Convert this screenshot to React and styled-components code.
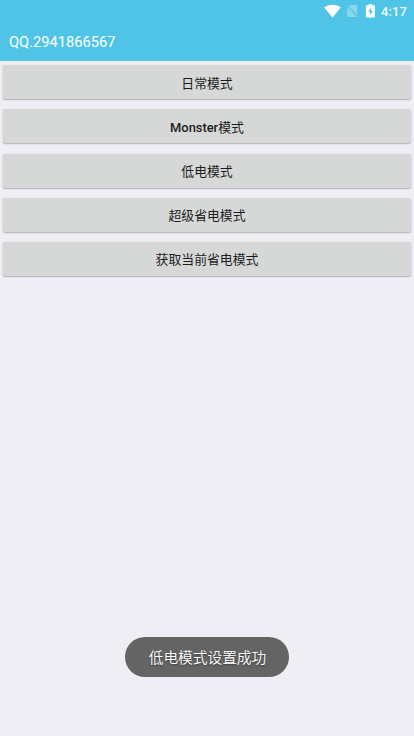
import React from "react";
import styled, { createGlobalStyle } from "styled-components";

const GlobalStyle = createGlobalStyle`
  * { box-sizing: border-box; }
  body { margin: 0; background: #efeef4; }
`;

const Screen = styled.main`
  position: relative;
  height: 736px;
  overflow: hidden;
  background: #efeef4;
  font-family: Roboto, "Noto Sans CJK SC", sans-serif;
`;

const Header = styled.header`
  height: 61px;
  background: #50c4e6;
  color: #fff;
`;

const StatusBar = styled.div`
  display: flex;
  align-items: center;
  justify-content: flex-end;
  height: 22px;
  padding-right: 7px;
`;

const WifiIcon = styled.svg`
  width: 17px;
  height: 14px;
  margin-right: 5px;
`;

const SimIcon = styled.svg`
  width: 12px;
  height: 14px;
  margin-right: 8px;
`;

const BatteryIcon = styled.svg`
  width: 9px;
  height: 14px;
  margin-right: 6px;
`;

const Clock = styled.time`
  width: 26px;
  font-size: 13px;
  font-weight: 500;
  line-height: 22px;
  letter-spacing: 0.1px;
  padding-top: 1px;
  color: rgba(255, 255, 255, 0.94);
`;

const Title = styled.h1`
  margin: 0;
  padding-left: 9px;
  font-size: 14.7px;
  font-weight: 400;
  line-height: 40px;
`;

const ModeList = styled.div`
  display: flex;
  flex-direction: column;
  gap: 10.07px;
  padding: 4.4px 3px 0;
`;

const ModeButton = styled.button`
  height: 34px;
  padding: 2.6px 0 0;
  border: 0;
  border-radius: 2px;
  background: #d6d8d7;
  box-shadow: 0 1px 1.5px rgba(0, 0, 0, 0.25), 0 0 1px rgba(0, 0, 0, 0.12);
  color: #1c1d1d;
  font-family: inherit;
  font-size: 12.87px;
  font-weight: 400;
  line-height: 32px;
`;

const Latin = styled.span`
  font-weight: 500;
`;

const Toast = styled.div`
  position: absolute;
  top: 637px;
  left: 125px;
  width: 164px;
  height: 40px;
  padding-left: 1px;
  border-radius: 20px;
  background: #646464;
  color: #fff;
  font-size: 14.7px;
  font-weight: 350;
  line-height: 42px;
  text-align: center;
  text-shadow: 0 1px 2px rgba(0, 0, 0, 0.4);
`;

const modes = [
  { label: "日常模式" },
  { latin: "Monster", label: "模式" },
  { label: "低电模式" },
  { label: "超级省电模式" },
  { label: "获取当前省电模式" },
];

export default function App() {
  return (
    <Screen>
      <GlobalStyle />
      <Header>
        <StatusBar>
          <WifiIcon viewBox="0 0 17 14">
            <path d="M0.2 3.5C5.2 -0.1 11.8 -0.1 16.8 3.5L8.5 13.5Z" fill="#fff" />
          </WifiIcon>
          <SimIcon viewBox="0 0 12 14">
            <path d="M4.6 1H10.2Q11.2 1 11.2 2V10.8L3.1 2.5ZM1.2 3.3L10.6 13H2.2Q1.2 13 1.2 12Z" fill="#fff" opacity=".32" />
            <path d="M0.6 1.5L11.8 13.1" stroke="#fff" strokeWidth=".7" opacity=".35" />
          </SimIcon>
          <BatteryIcon viewBox="0 0 9 14">
            <path fillRule="evenodd" d="M2.8 0H6.2V1.3H8.2Q9 1.3 9 2.1V12.7Q9 13.5 8.2 13.5H.8Q0 13.5 0 12.7V2.1Q0 1.3 .8 1.3H2.8ZM5.2 3.5L2.2 7.8H4.1V11.3L6.9 7H5.2Z" fill="#fff" />
          </BatteryIcon>
          <Clock>4:17</Clock>
        </StatusBar>
        <Title>QQ.2941866567</Title>
      </Header>
      <ModeList>
        {modes.map(({ latin, label }) => (
          <ModeButton key={label + (latin || "")}>
            {latin && <Latin>{latin}</Latin>}
            {label}
          </ModeButton>
        ))}
      </ModeList>
      <Toast role="status">低电模式设置成功</Toast>
    </Screen>
  );
}
